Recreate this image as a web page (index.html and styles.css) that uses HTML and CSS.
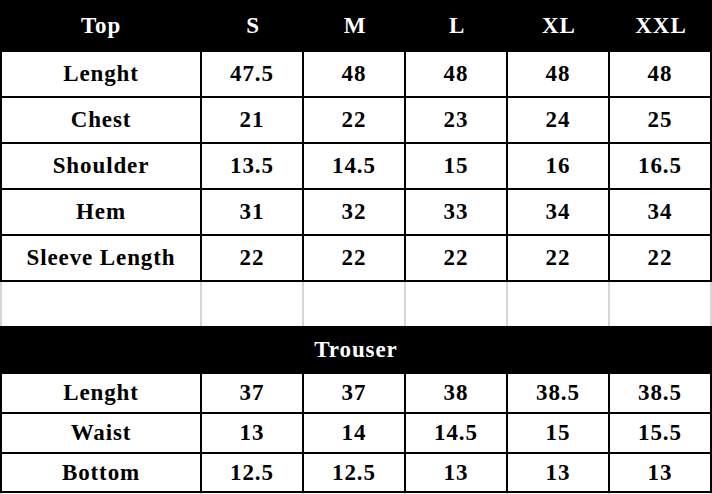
FILE: index.html
```html
<!DOCTYPE html>
<html lang="en">
<head>
<meta charset="utf-8">
<title>Size Chart</title>
<link rel="stylesheet" href="styles.css">
</head>
<body>
<table class="chart">
  <colgroup>
    <col class="c-label"><col class="c-size"><col class="c-size"><col class="c-size"><col class="c-size"><col class="c-size">
  </colgroup>
  <tr class="head">
    <th>Top</th><th>S</th><th>M</th><th>L</th><th>XL</th><th>XXL</th>
  </tr>
  <tr class="row"><td>Lenght</td><td>47.5</td><td>48</td><td>48</td><td>48</td><td>48</td></tr>
  <tr class="row"><td>Chest</td><td>21</td><td>22</td><td>23</td><td>24</td><td>25</td></tr>
  <tr class="row"><td>Shoulder</td><td>13.5</td><td>14.5</td><td>15</td><td>16</td><td>16.5</td></tr>
  <tr class="row"><td>Hem</td><td>31</td><td>32</td><td>33</td><td>34</td><td>34</td></tr>
  <tr class="row"><td>Sleeve Length</td><td>22</td><td>22</td><td>22</td><td>22</td><td>22</td></tr>
  <tr class="blank"><td></td><td></td><td></td><td></td><td></td><td></td></tr>
  <tr class="section"><th colspan="6">Trouser</th></tr>
  <tr class="row short"><td>Lenght</td><td>37</td><td>37</td><td>38</td><td>38.5</td><td>38.5</td></tr>
  <tr class="row short"><td>Waist</td><td>13</td><td>14</td><td>14.5</td><td>15</td><td>15.5</td></tr>
  <tr class="row short last"><td>Bottom</td><td>12.5</td><td>12.5</td><td>13</td><td>13</td><td>13</td></tr>
  <tr class="blank tail"><td></td><td></td><td></td><td></td><td></td><td></td></tr>
</table>
</body>
</html>
```
FILE: styles.css
```css
html, body {
  margin: 0;
  padding: 0;
  background: #fff;
  width: 712px;
  height: 494px;
  overflow: hidden;
}

.chart {
  border-collapse: separate;
  border-spacing: 0;
  table-layout: fixed;
  width: 712px;
  font-family: "Liberation Serif", "Times New Roman", serif;
  font-weight: bold;
  font-size: 23px;
  letter-spacing: 0.9px;
  color: #000;
}

.c-label { width: 202px; }
.c-size { width: 102px; }

.chart th,
.chart td {
  box-sizing: border-box;
  padding: 0;
  text-align: center;
  vertical-align: middle;
  font-weight: bold;
}

.head th {
  height: 52px;
  background: #000;
  color: #fff;
}

.row td {
  height: 46px;
  border-right: 2px solid #000;
  border-bottom: 2px solid #000;
}

.row td:first-child {
  border-left: 2px solid #000;
}

.row.short td {
  height: 40px;
}

.row.short.last td {
  height: 39px;
}

.blank td {
  height: 44px;
  border-right: 2px solid #d6d6d6;
}

.blank td:first-child {
  border-left: 2px solid #d6d6d6;
}

.blank.tail td {
  height: 10px;
}

.section th {
  height: 48px;
  background: #000;
  color: #fff;
}
```
